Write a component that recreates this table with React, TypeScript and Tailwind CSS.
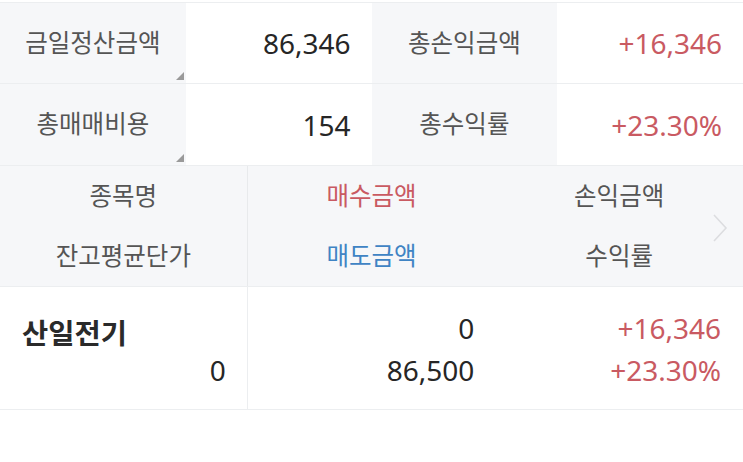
import React from "react";

const font = { fontFamily: '"Noto Sans", "Noto Sans CJK KR", sans-serif' };

function Tri() {
  return (
    <div className="absolute right-[2px] bottom-[3px] w-0 h-0 border-l-[8px] border-l-transparent border-b-[8px] border-b-[#9a9a9a]" />
  );
}

function LabelCell({ text, tri }: { text: string; tri?: boolean }) {
  return (
    <div className="relative flex items-center justify-center bg-[#f6f7f9] text-[24.5px] text-[#555]">
      {text}
      {tri && <Tri />}
    </div>
  );
}

function ValueCell({ text, red }: { text: string; red?: boolean }) {
  return (
    <div
      className={`flex items-center justify-end bg-white pr-[21px] text-[28px] ${
        red ? "text-[#c95a62]" : "text-[#262626]"
      }`}
    >
      {text}
    </div>
  );
}

export default function App() {
  return (
    <div className="w-[743px] h-[462px] bg-white overflow-hidden" style={font}>
      <div className="h-[2px] bg-white" />
      <div className="grid grid-cols-4 h-[81px] border-t border-[#eceef0]">
        <LabelCell text="금일정산금액" tri />
        <ValueCell text="86,346" />
        <LabelCell text="총손익금액" />
        <ValueCell text="+16,346" red />
      </div>
      <div className="grid grid-cols-4 h-[82px] border-t border-[#eceef0]">
        <LabelCell text="총매매비용" tri />
        <ValueCell text="154" />
        <LabelCell text="총수익률" />
        <ValueCell text="+23.30%" red />
      </div>
      <div className="relative grid grid-cols-3 h-[121px] bg-[#f6f7f9] border-t border-[#eceef0] text-[24.5px]">
        <div className="flex flex-col border-r border-[#e8eaec] text-[#555]">
          <div className="h-[60px] leading-[60px] text-center">종목명</div>
          <div className="h-[60px] leading-[60px] text-center">잔고평균단가</div>
        </div>
        <div className="flex flex-col">
          <div className="h-[60px] leading-[60px] text-center text-[#c95a62]">매수금액</div>
          <div className="h-[60px] leading-[60px] text-center text-[#3f84c4]">매도금액</div>
        </div>
        <div className="flex flex-col text-[#555]">
          <div className="h-[60px] leading-[60px] text-center">손익금액</div>
          <div className="h-[60px] leading-[60px] text-center">수익률</div>
        </div>
        <svg
          className="absolute left-[711px] top-[47px]"
          width="18"
          height="30"
          viewBox="0 0 18 30"
          fill="none"
        >
          <path d="M3 2 L15 15 L3 28" stroke="#dcdde0" strokeWidth="1.6" />
        </svg>
      </div>
      <div className="grid grid-cols-3 h-[124px] border-t border-b border-[#eceef0] bg-white text-[28px]">
        <div className="flex flex-col border-r border-[#eceef0] pt-[29px]">
          <div className="h-[34px] leading-[34px] pl-[22px] text-[28.5px] font-bold text-[#2a2a2a]">
            산일전기
          </div>
          <div className="h-[40px] leading-[40px] pr-[21px] text-right text-[#262626]">0</div>
        </div>
        <div className="flex flex-col pt-[20px] pr-[21px] text-right text-[#262626]">
          <div className="h-[42px] leading-[42px]">0</div>
          <div className="h-[42px] leading-[42px]">86,500</div>
        </div>
        <div className="flex flex-col pt-[20px] pr-[22px] text-right text-[#c95a62]">
          <div className="h-[42px] leading-[42px]">+16,346</div>
          <div className="h-[42px] leading-[42px]">+23.30%</div>
        </div>
      </div>
    </div>
  );
}
